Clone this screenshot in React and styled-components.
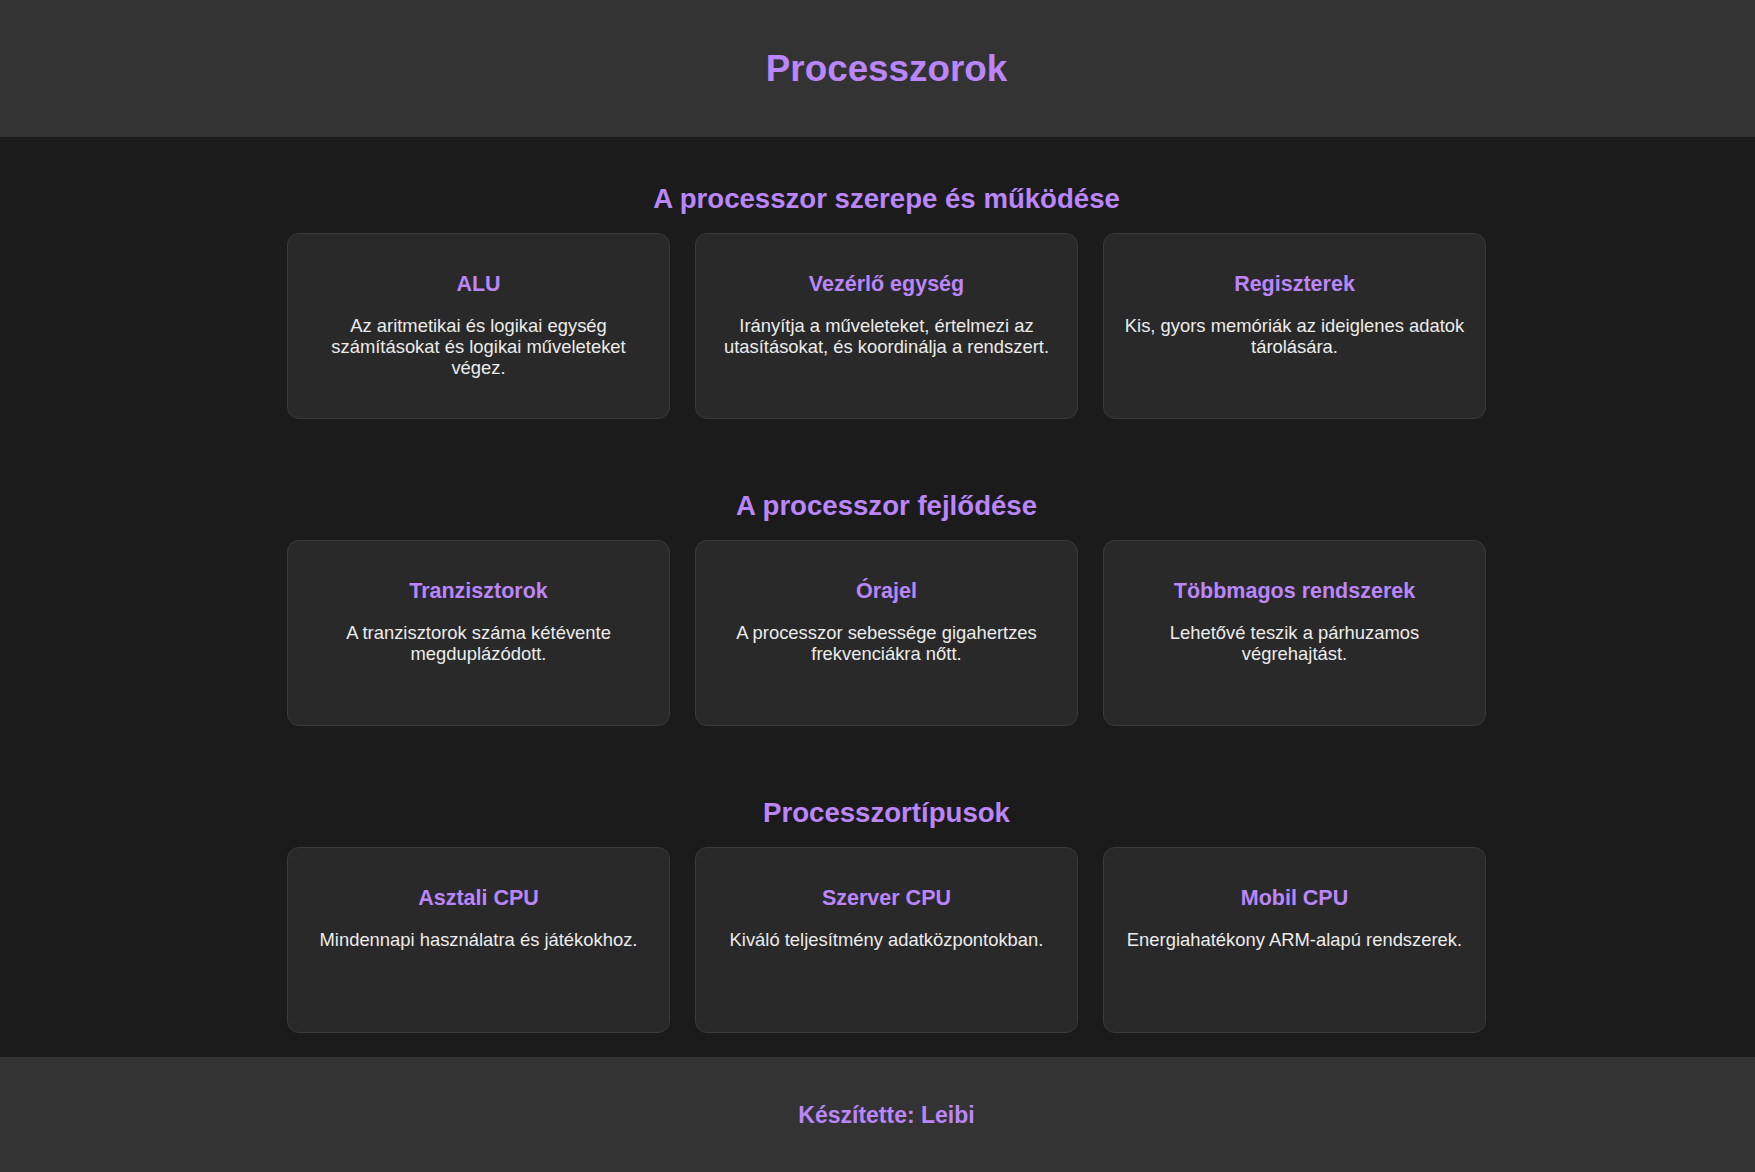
import React from "react";
import styled, { createGlobalStyle } from "styled-components";

const GlobalStyle = createGlobalStyle`
  html, body {
    margin: 0;
    padding: 0;
    background: #1b1b1b;
    overflow-x: hidden;
  }
  body {
    font-family: "Liberation Sans", Arial, Helvetica, sans-serif;
    color: #e6e6e6;
  }
  * { box-sizing: border-box; }
`;

const PURPLE = "#bb86fc";

const Header = styled.header`
  background: #333333;
  padding: 23px 0 23px 18px;
  text-align: center;
`;

const Title = styled.h1`
  margin: 24.7px 0;
  font-size: 36.8px;
  font-weight: 700;
  line-height: normal;
  color: ${PURPLE};
`;

const Main = styled.main`
  background: #1b1b1b;
  padding: 46px 0 24px 18px;
  display: flex;
  flex-direction: column;
  gap: 71px;
`;

const Section = styled.section`
  width: 1199px;
  margin: 0 auto;
  display: flex;
  flex-direction: column;
  gap: 17.5px;
`;

const SectionTitle = styled.h2`
  margin: 0;
  font-size: 27.6px;
  font-weight: 700;
  line-height: normal;
  text-align: center;
  color: ${PURPLE};
`;

const CardGrid = styled.div`
  display: grid;
  grid-template-columns: repeat(3, 383px);
  column-gap: 25px;
`;

const Card = styled.article`
  height: 186.5px;
  background: #292929;
  border: 1px solid #3b3b3b;
  border-radius: 12px;
  padding: 38.5px 18px 18px;
  text-align: center;
`;

const CardTitle = styled.h3`
  margin: 0;
  font-size: 21.5px;
  font-weight: 700;
  line-height: normal;
  color: ${PURPLE};
`;

const CardText = styled.p`
  margin: 17.6px 0 0;
  font-size: 18.4px;
  line-height: 1.15;
  color: #ececec;
`;

const Footer = styled.footer`
  background: #333333;
  height: 116px;
  padding-left: 18px;
  display: flex;
  align-items: center;
  justify-content: center;
`;

const FooterText = styled.p`
  margin: 0;
  font-size: 23px;
  font-weight: 700;
  color: ${PURPLE};
`;

const sections = [
  {
    title: "A processzor szerepe és működése",
    cards: [
      { t: "ALU", d: "Az aritmetikai és logikai egység számításokat és logikai műveleteket végez." },
      { t: "Vezérlő egység", d: "Irányítja a műveleteket, értelmezi az utasításokat, és koordinálja a rendszert." },
      { t: "Regiszterek", d: "Kis, gyors memóriák az ideiglenes adatok tárolására." },
    ],
  },
  {
    title: "A processzor fejlődése",
    cards: [
      { t: "Tranzisztorok", d: "A tranzisztorok száma kétévente megduplázódott." },
      { t: "Órajel", d: "A processzor sebessége gigahertzes frekvenciákra nőtt." },
      { t: "Többmagos rendszerek", d: "Lehetővé teszik a párhuzamos végrehajtást." },
    ],
  },
  {
    title: "Processzortípusok",
    cards: [
      { t: "Asztali CPU", d: "Mindennapi használatra és játékokhoz." },
      { t: "Szerver CPU", d: "Kiváló teljesítmény adatközpontokban." },
      { t: "Mobil CPU", d: "Energiahatékony ARM-alapú rendszerek." },
    ],
  },
];

export default function App() {
  return (
    <>
      <GlobalStyle />
      <Header>
        <Title>Processzorok</Title>
      </Header>
      <Main>
        {sections.map((s) => (
          <Section key={s.title}>
            <SectionTitle>{s.title}</SectionTitle>
            <CardGrid>
              {s.cards.map((c) => (
                <Card key={c.t}>
                  <CardTitle>{c.t}</CardTitle>
                  <CardText>{c.d}</CardText>
                </Card>
              ))}
            </CardGrid>
          </Section>
        ))}
      </Main>
      <Footer>
        <FooterText>Készítette: Leibi</FooterText>
      </Footer>
    </>
  );
}
